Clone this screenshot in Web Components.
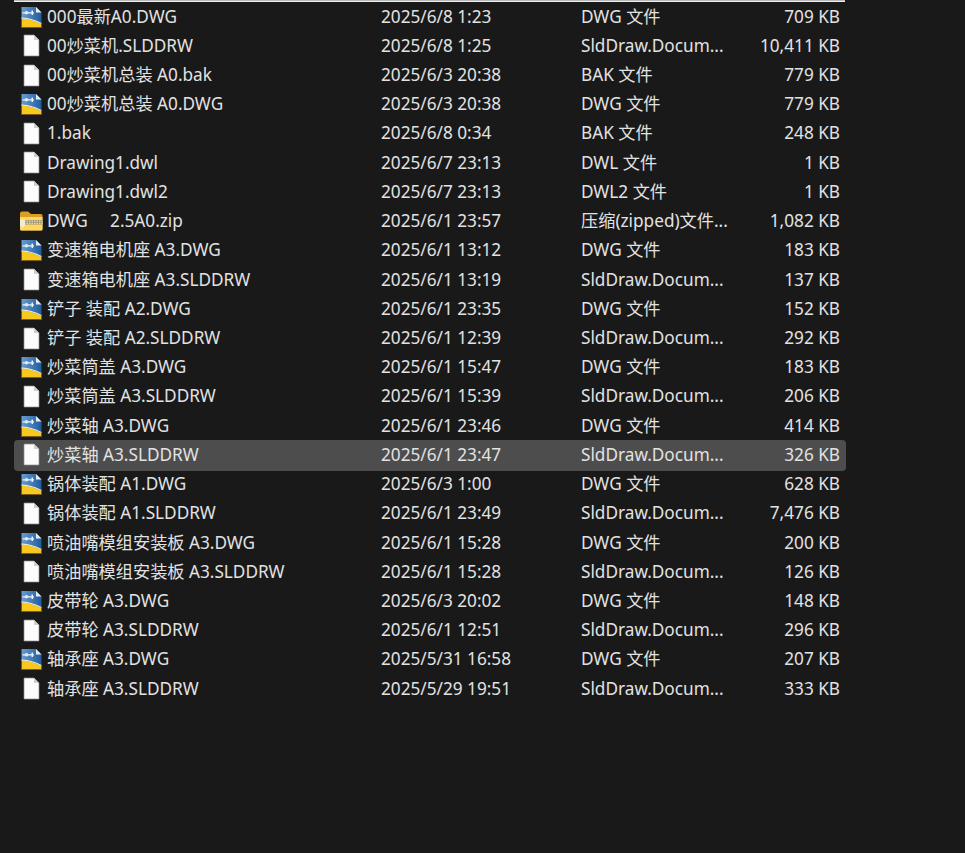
<!DOCTYPE html>
<html lang="zh"><head><meta charset="utf-8"><title>Files</title>
<style>
html,body{margin:0;padding:0;height:853px;overflow:hidden;background:#191919;}
body{font-family:"Noto Sans","Noto Sans CJK SC",sans-serif;color:#e2e2e2;}
file-list{margin-left:14px;width:832px;}
</style></head><body>
<file-list></file-list>
<template id="row-t">
<style>
:host{display:grid;grid-template-columns:33px 334px 200px 172px 87px;height:29.22px;align-items:center;font-size:17.2px;line-height:24px;white-space:nowrap;border-radius:4px;box-sizing:border-box;}
:host([selected]){background:#4d4d4d;box-shadow:0 1px 0 #4d4d4d;}
.ic{display:flex;justify-content:center;align-items:center;height:24px;padding-left:2px;box-sizing:border-box;}
svg{display:block;}
svg.z{margin-right:2px;}
.sz{text-align:right;}
</style>
<div class="ic" id="ic"></div><div id="n"></div><div id="d"></div><div id="k"></div><div class="sz" id="s"></div>
</template>
<script>
const ICONS={
dwg:`<svg width="21" height="22" viewBox="0 0 21 22"><defs><linearGradient id="b" x1="0" y1="0" x2="1" y2="0"><stop offset="0" stop-color="#6a9dd0"/><stop offset="1" stop-color="#1f5c9e"/></linearGradient></defs><path d="M.500 1H15l5.500 5.500V21.500H.500z" fill="url(#b)"/><path d="M15 1l5.500 5.500H15z" fill="#e4edf5"/><path d="M1.500 6.200H13V7.400H1.500zM10.500 4.500h1.500v4.500h-1.500z" fill="#eef4fa"/><circle cx="5.500" cy="6.800" r="1.800" fill="#dfe9f4"/><path d="M.500 12.500C8 13 14 14.500 20.500 18V21.500H.500z" fill="#f8c81e"/><path d="M.500 11.500C8 12 14 13.500 20.500 17V18C14 14.500 8 13 .500 12.500z" fill="#f6f2dc"/><path d="M.500 13v8.500h20V18" fill="none" stroke="#7c5a10" stroke-width="1"/></svg>`,
doc:`<svg width="17" height="23" viewBox="0 0 17 23"><path d="M1 1h10l5 5v16H1z" fill="#fcfcfc" stroke="#8e8e8e" stroke-width=".7"/><path d="M11 1l5 5h-5z" fill="#cfcfcf"/></svg>`,
zip:`<svg class="z" width="24" height="20" viewBox="0 0 24 20"><path d="M1 2.500Q1 .500 3 .500H9L12 3H22Q23.500 3 23.500 4.500V18Q23.500 19.500 22 19.500H2.500Q1 19.500 1 18z" fill="#dc9d24"/><path d="M1 6H23.500V18Q23.500 19.500 22 19.500H2.500Q1 19.500 1 18z" fill="#fcd765"/><path d="M5 9h18.500v4.500H5z" fill="#a39670"/><path d="M5 10.200h18.500M5 12.300h18.500" stroke="#f1edd8" stroke-width="1" stroke-dasharray="1.500 1"/><path d="M1 8.500h5v6l-2.500 2.500L1 14.500z" fill="#f2ecd2"/></svg>`};
class FileRow extends HTMLElement{
  connectedCallback(){
    if(this.shadowRoot)return;
    const r=this.attachShadow({mode:'open'});
    r.appendChild(document.getElementById('row-t').content.cloneNode(true));
    r.getElementById('ic').innerHTML=ICONS[this.getAttribute('icon')];
    for(const k of ['n','d','k','s'])r.getElementById(k).textContent=this.getAttribute(k);
  }
}
customElements.define('file-row',FileRow);
class FileList extends HTMLElement{
  constructor(){super();
    const r=this.attachShadow({mode:'open'});
    r.innerHTML=`<style>:host{display:block;padding-top:2px;position:relative;}
    .edge{position:absolute;left:0;right:1px;top:0;height:2px;background:#b9b9b9;border-bottom:1px solid #eee;box-sizing:border-box;}</style><div class="edge"></div><slot></slot>`;
  }
}
customElements.define('file-list',FileList);
const S='SldDraw.Docum...';
const rows=[
['dwg','000最新A0.DWG','2025/6/8 1:23','DWG 文件','709 KB'],
['doc','00炒菜机.SLDDRW','2025/6/8 1:25',S,'10,411 KB'],
['doc','00炒菜机总装 A0.bak','2025/6/3 20:38','BAK 文件','779 KB'],
['dwg','00炒菜机总装 A0.DWG','2025/6/3 20:38','DWG 文件','779 KB'],
['doc','1.bak','2025/6/8 0:34','BAK 文件','248 KB'],
['doc','Drawing1.dwl','2025/6/7 23:13','DWL 文件','1 KB'],
['doc','Drawing1.dwl2','2025/6/7 23:13','DWL2 文件','1 KB'],
['zip','DWG\u00a0\u00a0\u00a0\u00a0\u00a02.5A0.zip','2025/6/1 23:57','压缩(zipped)文件...','1,082 KB'],
['dwg','变速箱电机座 A3.DWG','2025/6/1 13:12','DWG 文件','183 KB'],
['doc','变速箱电机座 A3.SLDDRW','2025/6/1 13:19',S,'137 KB'],
['dwg','铲子 装配 A2.DWG','2025/6/1 23:35','DWG 文件','152 KB'],
['doc','铲子 装配 A2.SLDDRW','2025/6/1 12:39',S,'292 KB'],
['dwg','炒菜筒盖 A3.DWG','2025/6/1 15:47','DWG 文件','183 KB'],
['doc','炒菜筒盖 A3.SLDDRW','2025/6/1 15:39',S,'206 KB'],
['dwg','炒菜轴 A3.DWG','2025/6/1 23:46','DWG 文件','414 KB'],
['doc','炒菜轴 A3.SLDDRW','2025/6/1 23:47',S,'326 KB',1],
['dwg','锅体装配 A1.DWG','2025/6/3 1:00','DWG 文件','628 KB'],
['doc','锅体装配 A1.SLDDRW','2025/6/1 23:49',S,'7,476 KB'],
['dwg','喷油嘴模组安装板 A3.DWG','2025/6/1 15:28','DWG 文件','200 KB'],
['doc','喷油嘴模组安装板 A3.SLDDRW','2025/6/1 15:28',S,'126 KB'],
['dwg','皮带轮 A3.DWG','2025/6/3 20:02','DWG 文件','148 KB'],
['doc','皮带轮 A3.SLDDRW','2025/6/1 12:51',S,'296 KB'],
['dwg','轴承座 A3.DWG','2025/5/31 16:58','DWG 文件','207 KB'],
['doc','轴承座 A3.SLDDRW','2025/5/29 19:51',S,'333 KB']];
const list=document.querySelector('file-list');
for(const [i,n,d,k,s,sel] of rows){
  const e=document.createElement('file-row');
  e.setAttribute('icon',i);e.setAttribute('n',n);e.setAttribute('d',d);e.setAttribute('k',k);e.setAttribute('s',s);
  if(sel)e.setAttribute('selected','');
  list.appendChild(e);
}
</script>
</body></html>
